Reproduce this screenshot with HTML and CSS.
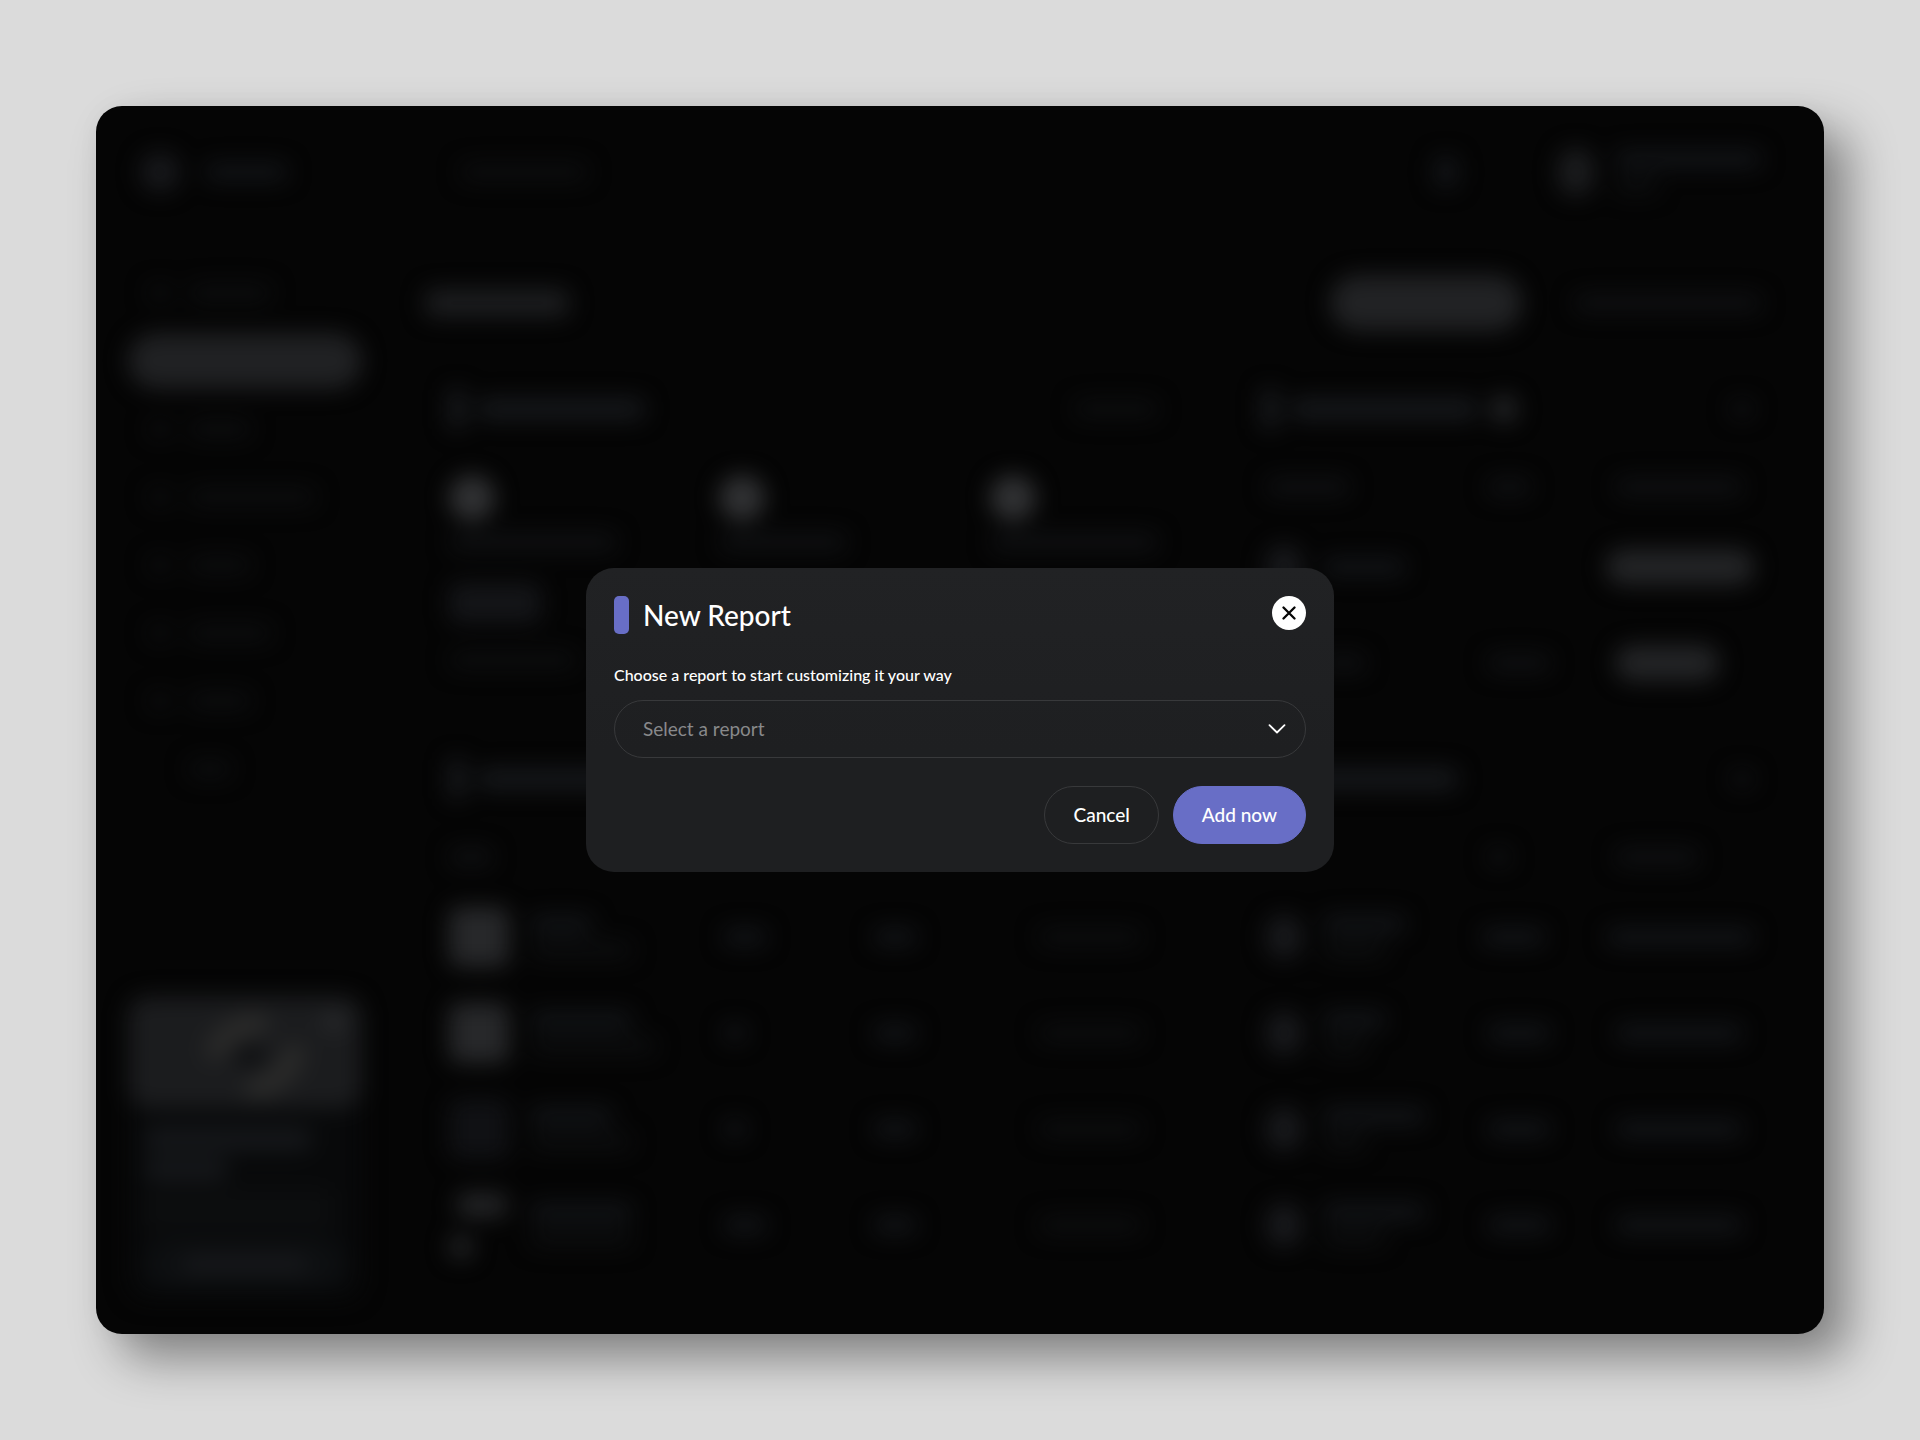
FILE: index.html
```html
<!DOCTYPE html>
<html lang="en">
<head>
<meta charset="utf-8">
<meta name="viewport" content="width=device-width, initial-scale=1">
<title>New Report</title>
<link rel="stylesheet" href="styles.css">
</head>
<body>
<div class="frame">
  <div class="backdrop" aria-hidden="true">
    <div class="topbar">
      <div class="brand"><i class="b logo"></i><i class="b mid w80"></i></div>
      <i class="b faint w120"></i>
      <div class="account">
        <i class="b bell"></i>
        <i class="b avatar"></i>
        <div class="lines"><i class="b mid w140"></i><i class="b faint w40"></i></div>
      </div>
    </div>
    <div class="columns">
      <div class="sidebar">
        <div class="item"><i class="b faint dot"></i><i class="b faint w80"></i></div>
        <div class="item active"></div>
        <div class="item"><i class="b faint dot"></i><i class="b faint w60"></i></div>
        <div class="item"><i class="b faint dot"></i><i class="b faint w120"></i></div>
        <div class="item"><i class="b faint dot"></i><i class="b faint w60"></i></div>
        <div class="item"><i class="b faint dot"></i><i class="b faint w80"></i></div>
        <div class="item"><i class="b faint dot"></i><i class="b faint w60"></i></div>
        <div class="item"><i class="b none dot"></i><i class="b faint w40"></i></div>
        <div class="promo">
          <svg class="promo-art" viewBox="0 0 234 112" preserveAspectRatio="none"><rect width="234" height="112" rx="20" fill="#1b1c1e"/><path d="M88 54Q98 32 130 28M128 92Q158 84 166 58" fill="none" stroke="#2b2b2a" stroke-width="22" stroke-linecap="round"/><ellipse cx="122" cy="60" rx="16" ry="10" fill="#0d0e10"/><circle cx="206" cy="26" r="10" fill="#2b2c2e"/></svg>
          <div class="promo-body">
            <i class="b title w160"></i>
            <i class="b title w80"></i>
            <i class="b faint w180 tall"></i>
            <div class="promo-button"><i class="b mid w120"></i></div>
          </div>
        </div>
      </div>
      <div class="main">
        <div class="page-head"><i class="b heading"></i><i class="b cta"></i><i class="b soft w180"></i></div>
        <div class="cards">
          <div class="card">
            <div class="card-head"><i class="b accent"></i><i class="b title w160"></i><i class="b faint w80 end"></i></div>
            <div class="stats">
              <div class="stat"><i class="b disc"></i><i class="b soft w160"></i><i class="b value"></i><i class="b faint w120"></i></div>
              <div class="stat"><i class="b disc"></i><i class="b soft w120"></i></div>
              <div class="stat"><i class="b disc"></i><i class="b soft w160"></i></div>
            </div>
          </div>
          <div class="card">
            <div class="card-head"><i class="b accent"></i><i class="b title w180"></i><i class="b count"></i><i class="b soft dot end"></i></div>
            <div class="row people labels"><i class="b soft w80"></i><i class="b soft w40"></i><i class="b soft w120"></i></div>
            <div class="row people"><div class="who"><i class="b avatar small"></i><i class="b mid w80"></i></div><i></i><i class="b chip w140"></i></div>
            <div class="row people"><div class="who"><i class="b avatar small"></i><i class="b soft w40"></i></div><i class="b soft w60"></i><i class="b chip w100"></i></div>
          </div>
          <div class="card">
            <div class="card-head"><i class="b accent"></i><i class="b title w160"></i></div>
            <div class="row goods labels"><i class="b soft w40"></i></div>
            <div class="row goods"><div class="who"><i class="b thumb"></i><div class="lines"><i class="b mid w60"></i><i class="b faint w100"></i></div></div><i class="b mid w40"></i><i class="b mid w40"></i><i class="b faint w100"></i></div>
            <div class="row goods"><div class="who"><i class="b thumb"></i><div class="lines"><i class="b mid w100"></i><i class="b faint w120"></i></div></div><i class="b mid dot"></i><i class="b mid w40"></i><i class="b faint w100"></i></div>
            <div class="row goods"><div class="who"><i class="b thumb dim"></i><div class="lines"><i class="b mid w80"></i><i class="b faint w100"></i></div></div><i class="b mid dot"></i><i class="b mid w40"></i><i class="b faint w100"></i></div>
            <div class="row goods"><div class="who"><svg class="thumb-art" viewBox="0 0 60 72"><rect x="8" y="4" width="50" height="24" rx="8" fill="#242527"/><circle cx="12" cy="58" r="12" fill="#242527"/></svg><div class="lines"><i class="b mid w100"></i><i class="b faint w100"></i></div></div><i class="b mid w40"></i><i class="b mid w40"></i><i class="b faint w100"></i></div>
          </div>
          <div class="card">
            <div class="card-head"><i class="b accent"></i><i class="b title w160"></i><i class="b soft dot end"></i></div>
            <div class="row people labels"><i></i><i class="b soft dot"></i><i class="b soft w80"></i></div>
            <div class="row people"><div class="who"><i class="b avatar small"></i><div class="lines"><i class="b mid w80"></i><i class="b faint w60"></i></div></div><i class="b mid w60"></i><i class="b mid w140"></i></div>
            <div class="row people"><div class="who"><i class="b avatar small"></i><div class="lines"><i class="b mid w60"></i><i class="b faint w40"></i></div></div><i class="b mid w60"></i><i class="b mid w120"></i></div>
            <div class="row people"><div class="who"><i class="b avatar small"></i><div class="lines"><i class="b mid w100"></i><i class="b faint w40"></i></div></div><i class="b mid w60"></i><i class="b mid w120"></i></div>
            <div class="row people"><div class="who"><i class="b avatar small"></i><div class="lines"><i class="b mid w100"></i><i class="b faint w60"></i></div></div><i class="b mid w60"></i><i class="b mid w120"></i></div>
          </div>
        </div>
      </div>
    </div>
  </div>

  <div class="overlay">
    <form class="dialog" role="dialog" aria-modal="true" aria-labelledby="dialog-title">
      <header class="dialog-head">
        <span class="dialog-mark"></span>
        <h1 class="dialog-title" id="dialog-title">New Report</h1>
        <button class="close" type="button" aria-label="Close">
          <svg width="14" height="14" viewBox="0 0 14 14" fill="none" stroke="#050505" stroke-width="2.300" stroke-linecap="round"><path d="M1.500 1.500l11 11M12.500 1.500l-11 11"/></svg>
        </button>
      </header>
      <label class="dialog-label" for="report">Choose a report to start customizing it your way</label>
      <div class="select-wrap">
        <select class="select" id="report"><option>Select a report</option></select>
        <svg class="chevron" width="18" height="10" viewBox="0 0 18 10" fill="none" stroke="#fff" stroke-width="1.800" stroke-linecap="round" stroke-linejoin="round"><path d="M1.500 1.200L9 8.500l7.500-7.300"/></svg>
      </div>
      <footer class="actions">
        <button class="button" type="button">Cancel</button>
        <button class="button primary" type="submit">Add now</button>
      </footer>
    </form>
  </div>
</div>
</body>
</html>
```
FILE: styles.css
```css
* { box-sizing: border-box; }

body {
  margin: 0;
  min-height: 100vh;
  padding: 106px 5%;
  display: flex;
  background: #dbdbdb;
  color: #fff;
  font-family: Lato, "Liberation Sans", sans-serif;
}

.frame {
  position: relative;
  flex: 1;
  min-width: 0;
  display: flex;
  border-radius: 26px;
  background: #050505;
  box-shadow: 24px 24px 48px rgba(0, 0, 0, .41), 0 0 24px rgba(0, 0, 0, .03);
}

/* Blurred dashboard behind the dialog */
.backdrop {
  flex: 1;
  min-width: 0;
  display: flex;
  flex-direction: column;
  padding: 0 46px 34px 32px;
  filter: blur(11px);
}

.b {
  display: block;
  flex: none;
  height: 18px;
  border-radius: 9px;
}

.faint { background: #0c0d0e; }
.soft { background: #0f1012; }
.mid { background: #121417; }
.title { height: 22px; background: #16181b; }
.none { background: none; }

.dot { width: 24px; }
.w40 { width: 44px; }
.w60 { width: 64px; }
.w80 { width: 84px; }
.w100 { width: 104px; }
.w120 { width: 128px; }
.w140 { width: 148px; }
.w160 { width: 168px; }
.w180 { width: 188px; }
.tall { height: 44px; }
.end { margin-left: auto; }

.topbar {
  height: 132px;
  display: flex;
  align-items: center;
  padding: 0 16px 0 12px;
}

.brand { display: flex; align-items: center; gap: 24px; width: 320px; }
.logo { width: 40px; height: 40px; border-radius: 20px; background: #17181b; }
.account { display: flex; align-items: center; gap: 20px; margin-left: auto; }
.bell { width: 24px; height: 32px; margin-right: 80px; background: #121417; }
.avatar { width: 36px; height: 48px; border-radius: 18px; background: #1b1c1e; }
.avatar.small { height: 44px; background: #18191c; }
.lines { display: flex; flex-direction: column; gap: 8px; }

.columns { flex: 1; display: flex; gap: 63px; }

.sidebar {
  flex: none;
  width: 234px;
  padding-top: 27px;
  display: flex;
  flex-direction: column;
  gap: 12px;
}

.item { height: 56px; display: flex; align-items: center; gap: 16px; padding: 0 20px; border-radius: 28px; }
.item.active { background: #202123; }

.promo { margin-top: auto; border-radius: 20px; background: #08090a; }
.promo-art { display: block; width: 100%; height: 112px; }
.promo-body { display: flex; flex-direction: column; gap: 8px; padding: 20px 16px 12px; }
.promo-button { height: 48px; display: grid; place-items: center; border-radius: 24px; background: #0d0f11; }
.promo-button .mid { background: #17181b; }

.main { flex: 1; min-width: 0; padding-top: 35px; }
.page-head { height: 60px; display: flex; align-items: center; gap: 52px; padding-right: 16px; }
.heading { width: 144px; height: 28px; margin-right: auto; background: #1c1d1f; }
.cta { width: 192px; height: 56px; border-radius: 28px; background: #212224; }

.cards {
  display: grid;
  grid-template-columns: 7fr 5fr;
  gap: 24px 56px;
  margin-top: 32px;
}

.card { min-width: 0; padding: 24px 24px 0; }
.card-head { height: 40px; display: flex; align-items: center; gap: 12px; }
.accent { width: 16px; height: 40px; border-radius: 4px; background: #191b1e; }
.count { width: 28px; height: 28px; border-radius: 14px; background: #222325; }

.stats { display: grid; grid-template-columns: 271fr 271fr 167fr; margin-top: 46px; }
.stat { display: flex; flex-direction: column; gap: 12px; }
.disc { width: 46px; height: 46px; border-radius: 23px; background: #313234; }
.value { width: 92px; height: 40px; margin: 20px 0 16px; background: #141518; }

.row { height: 96px; display: grid; align-items: center; }
.row.labels { height: 64px; margin-top: 26px; }
.people { grid-template-columns: 223fr 130fr 140fr; padding-left: 4px; }
.goods { grid-template-columns: 275fr 150fr 165fr 120fr; }
.who { display: flex; align-items: center; gap: 20px; }
.thumb { width: 60px; height: 60px; border-radius: 10px; background: #27282a; }
.thumb.dim { background: #101114; }
.thumb-art { width: 60px; height: 72px; }
.chip { height: 36px; background: #232426; border-radius: 18px; }

/* Dialog */
.overlay {
  position: absolute;
  inset: 0;
  display: grid;
  place-items: center;
}

.dialog {
  width: 748px;
  max-width: 100%;
  padding: 28px;
  display: flex;
  flex-direction: column;
  border-radius: 28px;
  background: linear-gradient(#212224, #1e1f21 60%);
}

.dialog-head { display: flex; align-items: center; gap: 14px; height: 38px; }
.dialog-mark { width: 15px; height: 38px; border-radius: 5px; background: #686ec6; }
.dialog-title { margin: 0; font-size: 28px; line-height: 38px; font-weight: 500; }

.close {
  align-self: flex-start;
  margin-left: auto;
  width: 34px;
  height: 34px;
  padding: 0;
  display: grid;
  place-items: center;
  border: 0;
  border-radius: 50%;
  background: #fff;
}

.dialog-label { margin: 28px 0 12px; font-size: 16px; line-height: 26px; font-weight: 500; }

.select-wrap { position: relative; }

.select {
  display: block;
  width: 100%;
  height: 58px;
  padding: 0 28px;
  appearance: none;
  border: 1px solid #38393b;
  border-radius: 29px;
  background: transparent;
  color: #88898b;
  font: 400 19px/26px Lato, "Liberation Sans", sans-serif;
}

.chevron { position: absolute; right: 20px; top: 24px; pointer-events: none; }

.actions { display: flex; justify-content: flex-end; gap: 14px; margin-top: 28px; }

.button {
  height: 58px;
  padding: 0 28px;
  border: 1px solid #38393b;
  border-radius: 29px;
  background: transparent;
  color: #fff;
  font: 500 19px/26px Lato, "Liberation Sans", sans-serif;
}

.button.primary { border-color: #686ec6; background: #686ec6; }
```
